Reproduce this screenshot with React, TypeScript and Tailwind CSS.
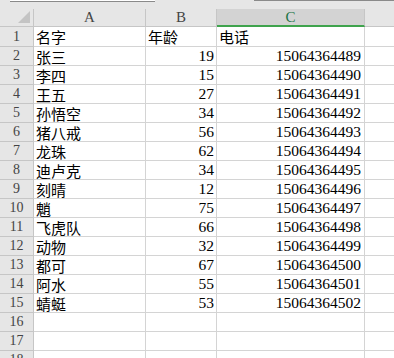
import React from 'react';

const rows: [string, string, string][] = [
  ['名字', '年龄', '电话'],
  ['张三', '19', '15064364489'],
  ['李四', '15', '15064364490'],
  ['王五', '27', '15064364491'],
  ['孙悟空', '34', '15064364492'],
  ['猪八戒', '56', '15064364493'],
  ['龙珠', '62', '15064364494'],
  ['迪卢克', '34', '15064364495'],
  ['刻晴', '12', '15064364496'],
  ['魈', '75', '15064364497'],
  ['飞虎队', '66', '15064364498'],
  ['动物', '32', '15064364499'],
  ['都可', '67', '15064364500'],
  ['阿水', '55', '15064364501'],
  ['蜻蜓', '53', '15064364502'],
  ['', '', ''],
  ['', '', ''],
  ['', '', ''],
];

const cjk = { fontFamily: '"Noto Sans CJK SC", sans-serif' };
const serif = { fontFamily: '"Liberation Serif", serif' };

export default function App() {
  return (
    <div className="w-[394px] h-[358px] overflow-hidden bg-white select-none">
      {/* formula bar remnant */}
      <div className="flex h-[2px] bg-[#e6e6e6]">
        <div className="w-[10px]" />
        <div className="w-[145px] bg-white border-b border-[#8a8a8a]" />
        <div className="w-[99px]" />
        <div className="flex-1 border-t border-[#8a8a8a]" />
      </div>
      <div className="h-[7px] bg-[#e6e6e6]" />

      {/* column headers */}
      <div className="flex h-[18px] bg-[#e6e6e6] text-[#444] text-[15px]" style={serif}>
        <div className="relative w-[34px] shrink-0 border-r border-b border-[#c6c6c6]">
          <div className="absolute right-[3px] bottom-[3px] w-0 h-0 border-l-[12px] border-l-transparent border-b-[12px] border-b-[#c4c4c4]" />
        </div>
        <div className="w-[112px] shrink-0 flex items-center justify-center border-r border-b border-[#c6c6c6] leading-none">A</div>
        <div className="w-[71px] shrink-0 flex items-center justify-center border-r border-b border-[#c6c6c6] leading-none">B</div>
        <div className="w-[148px] shrink-0 flex items-center justify-center bg-[#d3d3d3] border-r border-[#c6c6c6] border-b-2 border-b-[#3fa34d] text-[#217346] leading-none">C</div>
        <div className="flex-1 border-b border-[#c6c6c6]" />
      </div>

      {rows.map((r, i) => (
        <div key={i} className={`flex ${i === 0 ? 'h-[20px]' : 'h-[19px]'}`}>
          <div
            className="w-[34px] shrink-0 flex items-center justify-center bg-[#e6e6e6] border-r border-b border-[#c6c6c6] text-[14px] text-[#444] leading-none"
            style={serif}
          >
            {i + 1}
          </div>
          <div
            className="w-[112px] shrink-0 flex items-center pl-[2px] border-r border-b border-[#d4d4d4] text-[15px] text-black leading-none whitespace-nowrap"
            style={cjk}
          >
            {r[0]}
          </div>
          <div
            className={`w-[71px] shrink-0 flex items-center border-r border-b border-[#d4d4d4] text-black leading-none whitespace-nowrap ${i === 0 ? 'pl-[2px] text-[15px]' : 'justify-end pr-[2px] text-[15.5px]'}`}
            style={i === 0 ? cjk : serif}
          >
            {r[1]}
          </div>
          <div
            className={`w-[148px] shrink-0 flex items-center border-r border-b border-[#d4d4d4] text-black leading-none whitespace-nowrap ${i === 0 ? 'pl-[2px] text-[15px]' : 'justify-end pr-[3px] text-[15.5px]'}`}
            style={i === 0 ? cjk : serif}
          >
            {r[2]}
          </div>
          <div className="flex-1 border-b border-[#d4d4d4]" />
        </div>
      ))}
    </div>
  );
}
